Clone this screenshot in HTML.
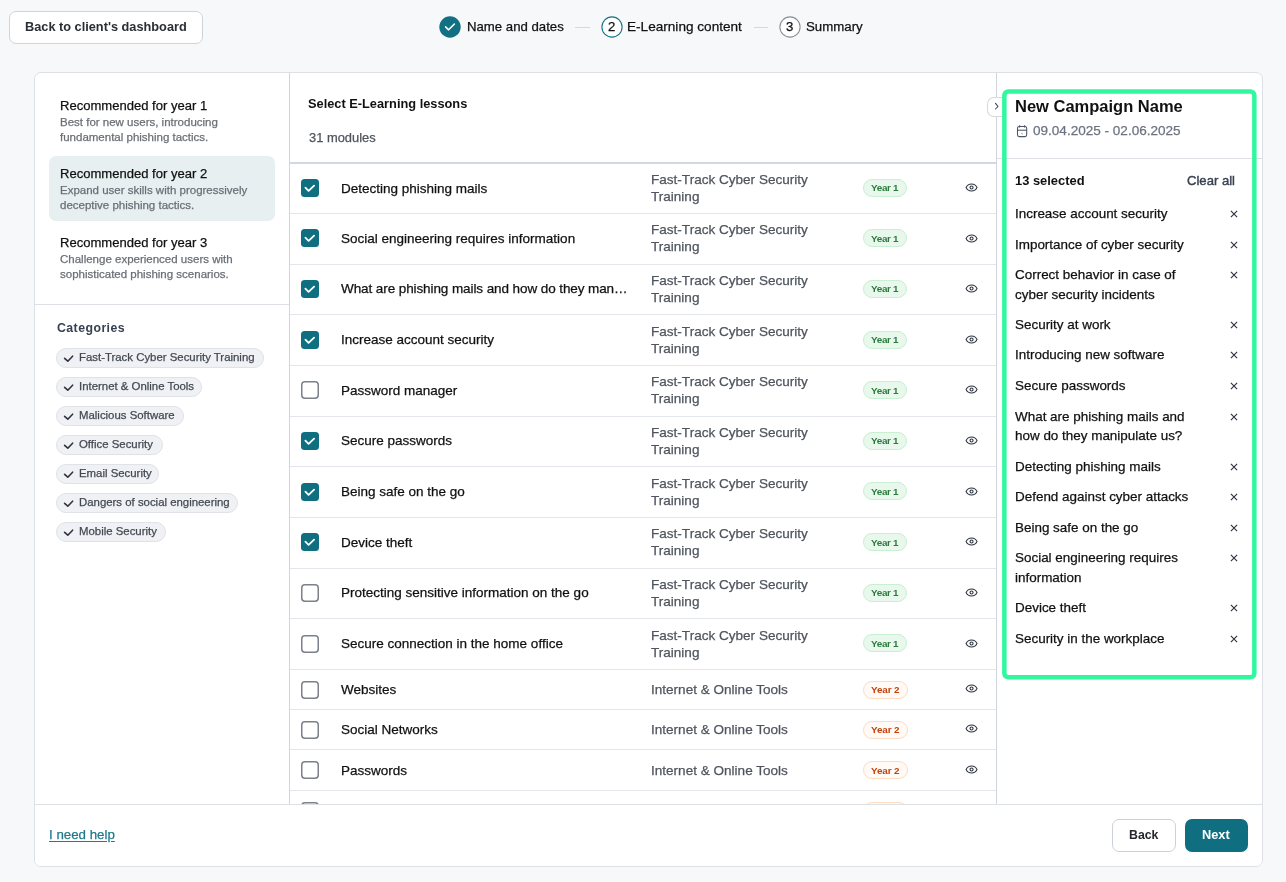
<!DOCTYPE html>
<html><head><meta charset="utf-8"><style>
html,body{margin:0;padding:0}
body{width:1286px;height:882px;overflow:hidden;background:#f7f8fa;position:relative;font-family:"Liberation Sans",sans-serif}
.a{position:absolute}
.t{position:absolute;white-space:nowrap;will-change:transform}
.chip{box-sizing:border-box;border:1px solid #dfe2e6;background:#eff1f4;border-radius:10px}
.badge{box-sizing:border-box;border-radius:9px;border:1px solid}
.b1{background:#e9f8ec;border-color:#c8efd0}
.b2{background:#fffaf6;border-color:#fddcc2}
</style></head><body>
<div class="a" style="left:9px;top:11px;width:194px;height:33px;box-sizing:border-box;border:1px solid #cfd4db;border-radius:7px;background:#fff"></div>
<div class="t" style="left:25.20px;top:17.18px;font-size:12.75px;font-weight:700;color:#2a2f36;line-height:20px;">Back to client's dashboard</div>
<svg class="a" style="left:439px;top:16.35px" width="22" height="22" viewBox="0 0 22 22"><circle cx="11" cy="11" r="10.7" fill="#127083"/><path d="M6.6 10.9 L9.6 13.8 L15.4 8.0" fill="none" stroke="#fff" stroke-width="1.6" stroke-linecap="round" stroke-linejoin="round"/></svg>
<div class="t" style="left:467.00px;top:17.02px;font-size:13.2px;font-weight:400;color:#111;line-height:20px;-webkit-text-stroke:0.25px #111;">Name and dates</div>
<div class="a" style="left:575px;top:27px;width:15px;height:1px;background:#d5d9de"></div>
<svg class="a" style="left:600.55px;top:16.4px" width="22" height="22" viewBox="0 0 22 22"><circle cx="11" cy="11" r="10.1" fill="#fff" stroke="#1b7385" stroke-width="1.1"/></svg>
<div class="t" style="left:607.60px;top:17.02px;font-size:13.2px;font-weight:400;color:#111;line-height:20px;-webkit-text-stroke:0.25px #111;">2</div>
<div class="t" style="left:627.30px;top:16.88px;font-size:13.6px;font-weight:400;color:#111;line-height:20px;-webkit-text-stroke:0.25px #111;">E-Learning content</div>
<div class="a" style="left:754px;top:27px;width:14px;height:1px;background:#d5d9de"></div>
<svg class="a" style="left:778.85px;top:16.4px" width="22" height="22" viewBox="0 0 22 22"><circle cx="11" cy="11" r="10.1" fill="#fff" stroke="#8b9199" stroke-width="1.1"/></svg>
<div class="t" style="left:786.20px;top:17.02px;font-size:13.2px;font-weight:400;color:#111;line-height:20px;-webkit-text-stroke:0.25px #111;">3</div>
<div class="t" style="left:806.30px;top:17.01px;font-size:13.25px;font-weight:400;color:#111;line-height:20px;-webkit-text-stroke:0.25px #111;">Summary</div>
<div class="a" style="left:34px;top:72px;width:1229px;height:795px;box-sizing:border-box;border:1px solid #dde1e6;border-radius:7px;background:#fff"></div>
<div class="a" style="left:289px;top:73px;width:1px;height:731px;background:#d0d5dc"></div>
<div class="a" style="left:996px;top:73px;width:1px;height:731px;background:#d0d5dc"></div>
<div class="a" style="left:35px;top:804px;width:1227px;height:1px;background:#dde1e6"></div>
<div class="a" style="left:49px;top:156px;width:226px;height:65px;background:#e7eff1;border-radius:7px"></div>
<div class="t" style="left:60.20px;top:96.28px;font-size:13.05px;font-weight:400;color:#111;line-height:20px;-webkit-text-stroke:0.25px #111;">Recommended for year 1</div>
<div class="t" style="left:60.20px;top:112.31px;font-size:11.5px;font-weight:400;color:#6a6f76;line-height:20px;-webkit-text-stroke:0.25px #6a6f76;">Best for new users, introducing</div>
<div class="t" style="left:60.20px;top:127.31px;font-size:11.5px;font-weight:400;color:#6a6f76;line-height:20px;-webkit-text-stroke:0.25px #6a6f76;">fundamental phishing tactics.</div>
<div class="t" style="left:60.20px;top:164.18px;font-size:13.05px;font-weight:400;color:#111;line-height:20px;-webkit-text-stroke:0.25px #111;">Recommended for year 2</div>
<div class="t" style="left:60.20px;top:180.21px;font-size:11.5px;font-weight:400;color:#6a6f76;line-height:20px;-webkit-text-stroke:0.25px #6a6f76;">Expand user skills with progressively</div>
<div class="t" style="left:60.20px;top:195.21px;font-size:11.5px;font-weight:400;color:#6a6f76;line-height:20px;-webkit-text-stroke:0.25px #6a6f76;">deceptive phishing tactics.</div>
<div class="t" style="left:60.20px;top:232.98px;font-size:13.05px;font-weight:400;color:#111;line-height:20px;-webkit-text-stroke:0.25px #111;">Recommended for year 3</div>
<div class="t" style="left:60.20px;top:249.01px;font-size:11.5px;font-weight:400;color:#6a6f76;line-height:20px;-webkit-text-stroke:0.25px #6a6f76;">Challenge experienced users with</div>
<div class="t" style="left:60.20px;top:264.01px;font-size:11.5px;font-weight:400;color:#6a6f76;line-height:20px;-webkit-text-stroke:0.25px #6a6f76;">sophisticated phishing scenarios.</div>
<div class="a" style="left:35px;top:304px;width:254px;height:1px;background:#dde1e6"></div>
<div class="t" style="left:57.00px;top:318.14px;font-size:12.3px;font-weight:700;color:#374151;line-height:20px;letter-spacing:0.45px">Categories</div>
<div class="a chip" style="left:56px;top:348px;width:208px;height:20px"></div>
<svg class="a" style="left:62px;top:353px" width="12" height="12" viewBox="0 0 12 12"><path d="M2.6 5.3 L5.8 8.2 L10.6 3.2" fill="none" stroke="#2d3340" stroke-width="1.6" stroke-linecap="round" stroke-linejoin="round"/></svg>
<div class="t" style="left:79.20px;top:346.85px;font-size:11.4px;font-weight:400;color:#434951;line-height:20px;-webkit-text-stroke:0.25px #434951;">Fast-Track Cyber Security Training</div>
<div class="a chip" style="left:56px;top:377px;width:146px;height:20px"></div>
<svg class="a" style="left:62px;top:382px" width="12" height="12" viewBox="0 0 12 12"><path d="M2.6 5.3 L5.8 8.2 L10.6 3.2" fill="none" stroke="#2d3340" stroke-width="1.6" stroke-linecap="round" stroke-linejoin="round"/></svg>
<div class="t" style="left:79.20px;top:376.05px;font-size:11.4px;font-weight:400;color:#434951;line-height:20px;-webkit-text-stroke:0.25px #434951;">Internet &amp; Online Tools</div>
<div class="a chip" style="left:56px;top:406px;width:128px;height:20px"></div>
<svg class="a" style="left:62px;top:411px" width="12" height="12" viewBox="0 0 12 12"><path d="M2.6 5.3 L5.8 8.2 L10.6 3.2" fill="none" stroke="#2d3340" stroke-width="1.6" stroke-linecap="round" stroke-linejoin="round"/></svg>
<div class="t" style="left:79.20px;top:404.95px;font-size:11.4px;font-weight:400;color:#434951;line-height:20px;-webkit-text-stroke:0.25px #434951;">Malicious Software</div>
<div class="a chip" style="left:56px;top:435px;width:107px;height:20px"></div>
<svg class="a" style="left:62px;top:440px" width="12" height="12" viewBox="0 0 12 12"><path d="M2.6 5.3 L5.8 8.2 L10.6 3.2" fill="none" stroke="#2d3340" stroke-width="1.6" stroke-linecap="round" stroke-linejoin="round"/></svg>
<div class="t" style="left:79.20px;top:433.85px;font-size:11.4px;font-weight:400;color:#434951;line-height:20px;-webkit-text-stroke:0.25px #434951;">Office Security</div>
<div class="a chip" style="left:56px;top:464px;width:103px;height:20px"></div>
<svg class="a" style="left:62px;top:469px" width="12" height="12" viewBox="0 0 12 12"><path d="M2.6 5.3 L5.8 8.2 L10.6 3.2" fill="none" stroke="#2d3340" stroke-width="1.6" stroke-linecap="round" stroke-linejoin="round"/></svg>
<div class="t" style="left:79.20px;top:463.05px;font-size:11.4px;font-weight:400;color:#434951;line-height:20px;-webkit-text-stroke:0.25px #434951;">Email Security</div>
<div class="a chip" style="left:56px;top:493px;width:182px;height:20px"></div>
<svg class="a" style="left:62px;top:498px" width="12" height="12" viewBox="0 0 12 12"><path d="M2.6 5.3 L5.8 8.2 L10.6 3.2" fill="none" stroke="#2d3340" stroke-width="1.6" stroke-linecap="round" stroke-linejoin="round"/></svg>
<div class="t" style="left:79.20px;top:491.85px;font-size:11.4px;font-weight:400;color:#434951;line-height:20px;-webkit-text-stroke:0.25px #434951;">Dangers of social engineering</div>
<div class="a chip" style="left:56px;top:522px;width:110px;height:20px"></div>
<svg class="a" style="left:62px;top:527px" width="12" height="12" viewBox="0 0 12 12"><path d="M2.6 5.3 L5.8 8.2 L10.6 3.2" fill="none" stroke="#2d3340" stroke-width="1.6" stroke-linecap="round" stroke-linejoin="round"/></svg>
<div class="t" style="left:79.20px;top:521.05px;font-size:11.4px;font-weight:400;color:#434951;line-height:20px;-webkit-text-stroke:0.25px #434951;">Mobile Security</div>
<div class="t" style="left:308.00px;top:94.06px;font-size:12.8px;font-weight:700;color:#111;line-height:20px;">Select E-Learning lessons</div>
<div class="t" style="left:309.30px;top:127.93px;font-size:12.9px;font-weight:400;color:#4f555d;line-height:20px;-webkit-text-stroke:0.25px #4f555d;">31 modules</div>
<div class="a" style="left:290px;top:162px;width:706px;height:2px;background:#d3d8de"></div>
<svg class="a" style="left:301px;top:179px" width="18" height="18" viewBox="0 0 18 18"><rect x="0" y="0" width="18" height="18" rx="3.5" fill="#0f6f81"/><path d="M4.4 8.7 L7.6 11.9 L13.1 6.6" fill="none" stroke="#fff" stroke-width="1.8" stroke-linecap="round" stroke-linejoin="round"/></svg>
<div class="t" style="left:340.70px;top:178.57px;font-size:13.5px;font-weight:400;color:#111;line-height:20px;-webkit-text-stroke:0.25px #111;">Detecting phishing mails</div>
<div class="t" style="left:650.60px;top:170.15px;font-size:13.55px;font-weight:400;color:#4f555e;line-height:20px;-webkit-text-stroke:0.25px #4f555e;">Fast-Track Cyber Security</div>
<div class="t" style="left:650.80px;top:187.15px;font-size:13.55px;font-weight:400;color:#4f555e;line-height:20px;-webkit-text-stroke:0.25px #4f555e;">Training</div>
<div class="a badge b1" style="left:863px;top:179px;width:44px;height:18px"></div>
<div class="t" style="left:871.00px;top:178.42px;font-size:9.9px;font-weight:700;color:#2b7a3b;line-height:20px;letter-spacing:-0.3px">Year 1</div>
<svg class="a" style="left:965.3px;top:181.25px" width="13.1" height="13.1" viewBox="0 0 24 24"><path d="M2 12 C2 12 5 5.6 12 5.6 C19 5.6 22 12 22 12 C22 12 19 18.4 12 18.4 C5 18.4 2 12 2 12Z" fill="none" stroke="#2d3340" stroke-width="2" stroke-linejoin="round"/><circle cx="12" cy="12" r="2.8" fill="none" stroke="#2d3340" stroke-width="2"/></svg>
<div class="a" style="left:290px;top:213px;width:706px;height:1px;background:#e3e6ea"></div>
<svg class="a" style="left:301px;top:229px" width="18" height="18" viewBox="0 0 18 18"><rect x="0" y="0" width="18" height="18" rx="3.5" fill="#0f6f81"/><path d="M4.4 8.7 L7.6 11.9 L13.1 6.6" fill="none" stroke="#fff" stroke-width="1.8" stroke-linecap="round" stroke-linejoin="round"/></svg>
<div class="t" style="left:340.70px;top:228.84px;font-size:13.5px;font-weight:400;color:#111;line-height:20px;-webkit-text-stroke:0.25px #111;">Social engineering requires information</div>
<div class="t" style="left:650.60px;top:220.43px;font-size:13.55px;font-weight:400;color:#4f555e;line-height:20px;-webkit-text-stroke:0.25px #4f555e;">Fast-Track Cyber Security</div>
<div class="t" style="left:650.80px;top:237.43px;font-size:13.55px;font-weight:400;color:#4f555e;line-height:20px;-webkit-text-stroke:0.25px #4f555e;">Training</div>
<div class="a badge b1" style="left:863px;top:229px;width:44px;height:18px"></div>
<div class="t" style="left:871.00px;top:228.69px;font-size:9.9px;font-weight:700;color:#2b7a3b;line-height:20px;letter-spacing:-0.3px">Year 1</div>
<svg class="a" style="left:965.3px;top:231.52px" width="13.1" height="13.1" viewBox="0 0 24 24"><path d="M2 12 C2 12 5 5.6 12 5.6 C19 5.6 22 12 22 12 C22 12 19 18.4 12 18.4 C5 18.4 2 12 2 12Z" fill="none" stroke="#2d3340" stroke-width="2" stroke-linejoin="round"/><circle cx="12" cy="12" r="2.8" fill="none" stroke="#2d3340" stroke-width="2"/></svg>
<div class="a" style="left:290px;top:264px;width:706px;height:1px;background:#e3e6ea"></div>
<svg class="a" style="left:301px;top:280px" width="18" height="18" viewBox="0 0 18 18"><rect x="0" y="0" width="18" height="18" rx="3.5" fill="#0f6f81"/><path d="M4.4 8.7 L7.6 11.9 L13.1 6.6" fill="none" stroke="#fff" stroke-width="1.8" stroke-linecap="round" stroke-linejoin="round"/></svg>
<div class="t" style="left:340.70px;top:279.49px;font-size:13.5px;font-weight:400;color:#111;line-height:20px;-webkit-text-stroke:0.25px #111;letter-spacing:-0.09px;">What are phishing mails and how do they man…</div>
<div class="t" style="left:650.60px;top:271.08px;font-size:13.55px;font-weight:400;color:#4f555e;line-height:20px;-webkit-text-stroke:0.25px #4f555e;">Fast-Track Cyber Security</div>
<div class="t" style="left:650.80px;top:288.08px;font-size:13.55px;font-weight:400;color:#4f555e;line-height:20px;-webkit-text-stroke:0.25px #4f555e;">Training</div>
<div class="a badge b1" style="left:863px;top:280px;width:44px;height:18px"></div>
<div class="t" style="left:871.00px;top:279.34px;font-size:9.9px;font-weight:700;color:#2b7a3b;line-height:20px;letter-spacing:-0.3px">Year 1</div>
<svg class="a" style="left:965.3px;top:282.17px" width="13.1" height="13.1" viewBox="0 0 24 24"><path d="M2 12 C2 12 5 5.6 12 5.6 C19 5.6 22 12 22 12 C22 12 19 18.4 12 18.4 C5 18.4 2 12 2 12Z" fill="none" stroke="#2d3340" stroke-width="2" stroke-linejoin="round"/><circle cx="12" cy="12" r="2.8" fill="none" stroke="#2d3340" stroke-width="2"/></svg>
<div class="a" style="left:290px;top:314px;width:706px;height:1px;background:#e3e6ea"></div>
<svg class="a" style="left:301px;top:331px" width="18" height="18" viewBox="0 0 18 18"><rect x="0" y="0" width="18" height="18" rx="3.5" fill="#0f6f81"/><path d="M4.4 8.7 L7.6 11.9 L13.1 6.6" fill="none" stroke="#fff" stroke-width="1.8" stroke-linecap="round" stroke-linejoin="round"/></svg>
<div class="t" style="left:340.70px;top:330.14px;font-size:13.5px;font-weight:400;color:#111;line-height:20px;-webkit-text-stroke:0.25px #111;">Increase account security</div>
<div class="t" style="left:650.60px;top:321.73px;font-size:13.55px;font-weight:400;color:#4f555e;line-height:20px;-webkit-text-stroke:0.25px #4f555e;">Fast-Track Cyber Security</div>
<div class="t" style="left:650.80px;top:338.73px;font-size:13.55px;font-weight:400;color:#4f555e;line-height:20px;-webkit-text-stroke:0.25px #4f555e;">Training</div>
<div class="a badge b1" style="left:863px;top:331px;width:44px;height:18px"></div>
<div class="t" style="left:871.00px;top:329.99px;font-size:9.9px;font-weight:700;color:#2b7a3b;line-height:20px;letter-spacing:-0.3px">Year 1</div>
<svg class="a" style="left:965.3px;top:332.82px" width="13.1" height="13.1" viewBox="0 0 24 24"><path d="M2 12 C2 12 5 5.6 12 5.6 C19 5.6 22 12 22 12 C22 12 19 18.4 12 18.4 C5 18.4 2 12 2 12Z" fill="none" stroke="#2d3340" stroke-width="2" stroke-linejoin="round"/><circle cx="12" cy="12" r="2.8" fill="none" stroke="#2d3340" stroke-width="2"/></svg>
<div class="a" style="left:290px;top:365px;width:706px;height:1px;background:#e3e6ea"></div>
<svg class="a" style="left:301px;top:381px" width="18" height="18" viewBox="0 0 18 18"><rect x="0.75" y="0.75" width="16.5" height="16.5" rx="3.2" fill="#fff" stroke="#7b818a" stroke-width="1.5"/></svg>
<div class="t" style="left:340.70px;top:380.79px;font-size:13.5px;font-weight:400;color:#111;line-height:20px;-webkit-text-stroke:0.25px #111;">Password manager</div>
<div class="t" style="left:650.60px;top:372.38px;font-size:13.55px;font-weight:400;color:#4f555e;line-height:20px;-webkit-text-stroke:0.25px #4f555e;">Fast-Track Cyber Security</div>
<div class="t" style="left:650.80px;top:389.38px;font-size:13.55px;font-weight:400;color:#4f555e;line-height:20px;-webkit-text-stroke:0.25px #4f555e;">Training</div>
<div class="a badge b1" style="left:863px;top:381px;width:44px;height:18px"></div>
<div class="t" style="left:871.00px;top:380.64px;font-size:9.9px;font-weight:700;color:#2b7a3b;line-height:20px;letter-spacing:-0.3px">Year 1</div>
<svg class="a" style="left:965.3px;top:383.47px" width="13.1" height="13.1" viewBox="0 0 24 24"><path d="M2 12 C2 12 5 5.6 12 5.6 C19 5.6 22 12 22 12 C22 12 19 18.4 12 18.4 C5 18.4 2 12 2 12Z" fill="none" stroke="#2d3340" stroke-width="2" stroke-linejoin="round"/><circle cx="12" cy="12" r="2.8" fill="none" stroke="#2d3340" stroke-width="2"/></svg>
<div class="a" style="left:290px;top:416px;width:706px;height:1px;background:#e3e6ea"></div>
<svg class="a" style="left:301px;top:432px" width="18" height="18" viewBox="0 0 18 18"><rect x="0" y="0" width="18" height="18" rx="3.5" fill="#0f6f81"/><path d="M4.4 8.7 L7.6 11.9 L13.1 6.6" fill="none" stroke="#fff" stroke-width="1.8" stroke-linecap="round" stroke-linejoin="round"/></svg>
<div class="t" style="left:340.70px;top:431.44px;font-size:13.5px;font-weight:400;color:#111;line-height:20px;-webkit-text-stroke:0.25px #111;">Secure passwords</div>
<div class="t" style="left:650.60px;top:423.03px;font-size:13.55px;font-weight:400;color:#4f555e;line-height:20px;-webkit-text-stroke:0.25px #4f555e;">Fast-Track Cyber Security</div>
<div class="t" style="left:650.80px;top:440.03px;font-size:13.55px;font-weight:400;color:#4f555e;line-height:20px;-webkit-text-stroke:0.25px #4f555e;">Training</div>
<div class="a badge b1" style="left:863px;top:432px;width:44px;height:18px"></div>
<div class="t" style="left:871.00px;top:431.29px;font-size:9.9px;font-weight:700;color:#2b7a3b;line-height:20px;letter-spacing:-0.3px">Year 1</div>
<svg class="a" style="left:965.3px;top:434.12px" width="13.1" height="13.1" viewBox="0 0 24 24"><path d="M2 12 C2 12 5 5.6 12 5.6 C19 5.6 22 12 22 12 C22 12 19 18.4 12 18.4 C5 18.4 2 12 2 12Z" fill="none" stroke="#2d3340" stroke-width="2" stroke-linejoin="round"/><circle cx="12" cy="12" r="2.8" fill="none" stroke="#2d3340" stroke-width="2"/></svg>
<div class="a" style="left:290px;top:466px;width:706px;height:1px;background:#e3e6ea"></div>
<svg class="a" style="left:301px;top:483px" width="18" height="18" viewBox="0 0 18 18"><rect x="0" y="0" width="18" height="18" rx="3.5" fill="#0f6f81"/><path d="M4.4 8.7 L7.6 11.9 L13.1 6.6" fill="none" stroke="#fff" stroke-width="1.8" stroke-linecap="round" stroke-linejoin="round"/></svg>
<div class="t" style="left:340.70px;top:482.09px;font-size:13.5px;font-weight:400;color:#111;line-height:20px;-webkit-text-stroke:0.25px #111;">Being safe on the go</div>
<div class="t" style="left:650.60px;top:473.68px;font-size:13.55px;font-weight:400;color:#4f555e;line-height:20px;-webkit-text-stroke:0.25px #4f555e;">Fast-Track Cyber Security</div>
<div class="t" style="left:650.80px;top:490.68px;font-size:13.55px;font-weight:400;color:#4f555e;line-height:20px;-webkit-text-stroke:0.25px #4f555e;">Training</div>
<div class="a badge b1" style="left:863px;top:482px;width:44px;height:18px"></div>
<div class="t" style="left:871.00px;top:481.94px;font-size:9.9px;font-weight:700;color:#2b7a3b;line-height:20px;letter-spacing:-0.3px">Year 1</div>
<svg class="a" style="left:965.3px;top:484.77px" width="13.1" height="13.1" viewBox="0 0 24 24"><path d="M2 12 C2 12 5 5.6 12 5.6 C19 5.6 22 12 22 12 C22 12 19 18.4 12 18.4 C5 18.4 2 12 2 12Z" fill="none" stroke="#2d3340" stroke-width="2" stroke-linejoin="round"/><circle cx="12" cy="12" r="2.8" fill="none" stroke="#2d3340" stroke-width="2"/></svg>
<div class="a" style="left:290px;top:517px;width:706px;height:1px;background:#e3e6ea"></div>
<svg class="a" style="left:301px;top:533px" width="18" height="18" viewBox="0 0 18 18"><rect x="0" y="0" width="18" height="18" rx="3.5" fill="#0f6f81"/><path d="M4.4 8.7 L7.6 11.9 L13.1 6.6" fill="none" stroke="#fff" stroke-width="1.8" stroke-linecap="round" stroke-linejoin="round"/></svg>
<div class="t" style="left:340.70px;top:532.74px;font-size:13.5px;font-weight:400;color:#111;line-height:20px;-webkit-text-stroke:0.25px #111;">Device theft</div>
<div class="t" style="left:650.60px;top:524.33px;font-size:13.55px;font-weight:400;color:#4f555e;line-height:20px;-webkit-text-stroke:0.25px #4f555e;">Fast-Track Cyber Security</div>
<div class="t" style="left:650.80px;top:541.33px;font-size:13.55px;font-weight:400;color:#4f555e;line-height:20px;-webkit-text-stroke:0.25px #4f555e;">Training</div>
<div class="a badge b1" style="left:863px;top:533px;width:44px;height:18px"></div>
<div class="t" style="left:871.00px;top:532.59px;font-size:9.9px;font-weight:700;color:#2b7a3b;line-height:20px;letter-spacing:-0.3px">Year 1</div>
<svg class="a" style="left:965.3px;top:535.42px" width="13.1" height="13.1" viewBox="0 0 24 24"><path d="M2 12 C2 12 5 5.6 12 5.6 C19 5.6 22 12 22 12 C22 12 19 18.4 12 18.4 C5 18.4 2 12 2 12Z" fill="none" stroke="#2d3340" stroke-width="2" stroke-linejoin="round"/><circle cx="12" cy="12" r="2.8" fill="none" stroke="#2d3340" stroke-width="2"/></svg>
<div class="a" style="left:290px;top:568px;width:706px;height:1px;background:#e3e6ea"></div>
<svg class="a" style="left:301px;top:584px" width="18" height="18" viewBox="0 0 18 18"><rect x="0.75" y="0.75" width="16.5" height="16.5" rx="3.2" fill="#fff" stroke="#7b818a" stroke-width="1.5"/></svg>
<div class="t" style="left:340.70px;top:583.39px;font-size:13.5px;font-weight:400;color:#111;line-height:20px;-webkit-text-stroke:0.25px #111;">Protecting sensitive information on the go</div>
<div class="t" style="left:650.60px;top:574.98px;font-size:13.55px;font-weight:400;color:#4f555e;line-height:20px;-webkit-text-stroke:0.25px #4f555e;">Fast-Track Cyber Security</div>
<div class="t" style="left:650.80px;top:591.98px;font-size:13.55px;font-weight:400;color:#4f555e;line-height:20px;-webkit-text-stroke:0.25px #4f555e;">Training</div>
<div class="a badge b1" style="left:863px;top:584px;width:44px;height:18px"></div>
<div class="t" style="left:871.00px;top:583.24px;font-size:9.9px;font-weight:700;color:#2b7a3b;line-height:20px;letter-spacing:-0.3px">Year 1</div>
<svg class="a" style="left:965.3px;top:586.07px" width="13.1" height="13.1" viewBox="0 0 24 24"><path d="M2 12 C2 12 5 5.6 12 5.6 C19 5.6 22 12 22 12 C22 12 19 18.4 12 18.4 C5 18.4 2 12 2 12Z" fill="none" stroke="#2d3340" stroke-width="2" stroke-linejoin="round"/><circle cx="12" cy="12" r="2.8" fill="none" stroke="#2d3340" stroke-width="2"/></svg>
<div class="a" style="left:290px;top:618px;width:706px;height:1px;background:#e3e6ea"></div>
<svg class="a" style="left:301px;top:635px" width="18" height="18" viewBox="0 0 18 18"><rect x="0.75" y="0.75" width="16.5" height="16.5" rx="3.2" fill="#fff" stroke="#7b818a" stroke-width="1.5"/></svg>
<div class="t" style="left:340.70px;top:634.04px;font-size:13.5px;font-weight:400;color:#111;line-height:20px;-webkit-text-stroke:0.25px #111;">Secure connection in the home office</div>
<div class="t" style="left:650.60px;top:625.63px;font-size:13.55px;font-weight:400;color:#4f555e;line-height:20px;-webkit-text-stroke:0.25px #4f555e;">Fast-Track Cyber Security</div>
<div class="t" style="left:650.80px;top:642.63px;font-size:13.55px;font-weight:400;color:#4f555e;line-height:20px;-webkit-text-stroke:0.25px #4f555e;">Training</div>
<div class="a badge b1" style="left:863px;top:634px;width:44px;height:18px"></div>
<div class="t" style="left:871.00px;top:633.89px;font-size:9.9px;font-weight:700;color:#2b7a3b;line-height:20px;letter-spacing:-0.3px">Year 1</div>
<svg class="a" style="left:965.3px;top:636.72px" width="13.1" height="13.1" viewBox="0 0 24 24"><path d="M2 12 C2 12 5 5.6 12 5.6 C19 5.6 22 12 22 12 C22 12 19 18.4 12 18.4 C5 18.4 2 12 2 12Z" fill="none" stroke="#2d3340" stroke-width="2" stroke-linejoin="round"/><circle cx="12" cy="12" r="2.8" fill="none" stroke="#2d3340" stroke-width="2"/></svg>
<div class="a" style="left:290px;top:669px;width:706px;height:1px;background:#e3e6ea"></div>
<svg class="a" style="left:301px;top:681px" width="18" height="18" viewBox="0 0 18 18"><rect x="0.75" y="0.75" width="16.5" height="16.5" rx="3.2" fill="#fff" stroke="#7b818a" stroke-width="1.5"/></svg>
<div class="t" style="left:340.70px;top:680.27px;font-size:13.5px;font-weight:400;color:#111;line-height:20px;-webkit-text-stroke:0.25px #111;">Websites</div>
<div class="t" style="left:651.00px;top:680.15px;font-size:13.55px;font-weight:400;color:#4f555e;line-height:20px;-webkit-text-stroke:0.25px #4f555e;">Internet &amp; Online Tools</div>
<div class="a badge b2" style="left:863px;top:681px;width:45px;height:18px"></div>
<div class="t" style="left:871.00px;top:680.12px;font-size:9.9px;font-weight:700;color:#c2410c;line-height:20px;letter-spacing:-0.1px">Year 2</div>
<svg class="a" style="left:965.3px;top:682.15px" width="13.1" height="13.1" viewBox="0 0 24 24"><path d="M2 12 C2 12 5 5.6 12 5.6 C19 5.6 22 12 22 12 C22 12 19 18.4 12 18.4 C5 18.4 2 12 2 12Z" fill="none" stroke="#2d3340" stroke-width="2" stroke-linejoin="round"/><circle cx="12" cy="12" r="2.8" fill="none" stroke="#2d3340" stroke-width="2"/></svg>
<div class="a" style="left:290px;top:709px;width:706px;height:1px;background:#e3e6ea"></div>
<svg class="a" style="left:301px;top:721px" width="18" height="18" viewBox="0 0 18 18"><rect x="0.75" y="0.75" width="16.5" height="16.5" rx="3.2" fill="#fff" stroke="#7b818a" stroke-width="1.5"/></svg>
<div class="t" style="left:340.70px;top:720.47px;font-size:13.5px;font-weight:400;color:#111;line-height:20px;-webkit-text-stroke:0.25px #111;">Social Networks</div>
<div class="t" style="left:651.00px;top:720.35px;font-size:13.55px;font-weight:400;color:#4f555e;line-height:20px;-webkit-text-stroke:0.25px #4f555e;">Internet &amp; Online Tools</div>
<div class="a badge b2" style="left:863px;top:721px;width:45px;height:18px"></div>
<div class="t" style="left:871.00px;top:720.32px;font-size:9.9px;font-weight:700;color:#c2410c;line-height:20px;letter-spacing:-0.1px">Year 2</div>
<svg class="a" style="left:965.3px;top:722.35px" width="13.1" height="13.1" viewBox="0 0 24 24"><path d="M2 12 C2 12 5 5.6 12 5.6 C19 5.6 22 12 22 12 C22 12 19 18.4 12 18.4 C5 18.4 2 12 2 12Z" fill="none" stroke="#2d3340" stroke-width="2" stroke-linejoin="round"/><circle cx="12" cy="12" r="2.8" fill="none" stroke="#2d3340" stroke-width="2"/></svg>
<div class="a" style="left:290px;top:749px;width:706px;height:1px;background:#e3e6ea"></div>
<svg class="a" style="left:301px;top:761px" width="18" height="18" viewBox="0 0 18 18"><rect x="0.75" y="0.75" width="16.5" height="16.5" rx="3.2" fill="#fff" stroke="#7b818a" stroke-width="1.5"/></svg>
<div class="t" style="left:340.70px;top:760.67px;font-size:13.5px;font-weight:400;color:#111;line-height:20px;-webkit-text-stroke:0.25px #111;">Passwords</div>
<div class="t" style="left:651.00px;top:760.55px;font-size:13.55px;font-weight:400;color:#4f555e;line-height:20px;-webkit-text-stroke:0.25px #4f555e;">Internet &amp; Online Tools</div>
<div class="a badge b2" style="left:863px;top:761px;width:45px;height:18px"></div>
<div class="t" style="left:871.00px;top:760.52px;font-size:9.9px;font-weight:700;color:#c2410c;line-height:20px;letter-spacing:-0.1px">Year 2</div>
<svg class="a" style="left:965.3px;top:762.55px" width="13.1" height="13.1" viewBox="0 0 24 24"><path d="M2 12 C2 12 5 5.6 12 5.6 C19 5.6 22 12 22 12 C22 12 19 18.4 12 18.4 C5 18.4 2 12 2 12Z" fill="none" stroke="#2d3340" stroke-width="2" stroke-linejoin="round"/><circle cx="12" cy="12" r="2.8" fill="none" stroke="#2d3340" stroke-width="2"/></svg>
<div class="a" style="left:290px;top:790px;width:706px;height:1px;background:#e3e6ea"></div>
<svg class="a" style="left:301px;top:802px" width="18" height="18" viewBox="0 0 18 18"><rect x="0.75" y="0.75" width="16.5" height="16.5" rx="3.2" fill="#fff" stroke="#7b818a" stroke-width="1.5"/></svg>
<div class="t" style="left:651.00px;top:800.75px;font-size:13.55px;font-weight:400;color:#4f555e;line-height:20px;-webkit-text-stroke:0.25px #4f555e;">Internet &amp; Online Tools</div>
<div class="a badge b2" style="left:863px;top:802px;width:45px;height:18px"></div>
<div class="t" style="left:871.00px;top:800.72px;font-size:9.9px;font-weight:700;color:#c2410c;line-height:20px;letter-spacing:-0.1px">Year 2</div>
<svg class="a" style="left:965.3px;top:802.75px" width="13.1" height="13.1" viewBox="0 0 24 24"><path d="M2 12 C2 12 5 5.6 12 5.6 C19 5.6 22 12 22 12 C22 12 19 18.4 12 18.4 C5 18.4 2 12 2 12Z" fill="none" stroke="#2d3340" stroke-width="2" stroke-linejoin="round"/><circle cx="12" cy="12" r="2.8" fill="none" stroke="#2d3340" stroke-width="2"/></svg>
<div class="a" style="left:35px;top:805px;width:1227px;height:61px;background:#fff;border-radius:0 0 6px 6px"></div>
<div class="a" style="left:290px;top:804px;width:706px;height:1px;background:#dde1e6"></div>
<div class="a" style="left:997px;top:158px;width:265px;height:1px;background:#dde1e6"></div>
<div class="t" style="left:1015.30px;top:96.08px;font-size:16.5px;font-weight:700;color:#111;line-height:20px;">New Campaign Name</div>
<svg class="a" style="left:1016px;top:124px" width="12" height="14" viewBox="0 0 12 14"><rect x="1.5" y="2.4" width="9.2" height="10.2" rx="1.8" fill="none" stroke="#4b5563" stroke-width="1.05"/><line x1="1.5" y1="6.2" x2="10.7" y2="6.2" stroke="#4b5563" stroke-width="1.05"/><line x1="3.6" y1="1.3" x2="3.6" y2="3.4" stroke="#4b5563" stroke-width="1.1"/><line x1="8.6" y1="1.3" x2="8.6" y2="3.4" stroke="#4b5563" stroke-width="1.1"/><line x1="5.8" y1="9.2" x2="6.3" y2="10.2" stroke="#4b5563" stroke-width="0.9"/></svg>
<div class="t" style="left:1033.40px;top:120.50px;font-size:13.55px;font-weight:400;color:#6b7280;line-height:20px;-webkit-text-stroke:0.25px #6b7280;">09.04.2025 - 02.06.2025</div>
<div class="t" style="left:1015.30px;top:170.93px;font-size:12.9px;font-weight:700;color:#111;line-height:20px;">13 selected</div>
<div class="t" style="left:1187.00px;top:171.06px;font-size:13.1px;font-weight:400;color:#374151;line-height:20px;-webkit-text-stroke:0.4px #374151">Clear all</div>
<div class="t" style="left:1014.80px;top:204.44px;font-size:13.45px;font-weight:400;color:#111;line-height:20px;-webkit-text-stroke:0.25px #111;">Increase account security</div>
<svg class="a" style="left:1228.0px;top:208.4px" width="12" height="12" viewBox="0 0 12 12"><path d="M2.9 2.9 L9.1 9.1 M9.1 2.9 L2.9 9.1" stroke="#2d3340" stroke-width="1.15" stroke-linecap="butt"/></svg>
<div class="t" style="left:1014.80px;top:235.04px;font-size:13.45px;font-weight:400;color:#111;line-height:20px;-webkit-text-stroke:0.25px #111;">Importance of cyber security</div>
<svg class="a" style="left:1228.0px;top:239.0px" width="12" height="12" viewBox="0 0 12 12"><path d="M2.9 2.9 L9.1 9.1 M9.1 2.9 L2.9 9.1" stroke="#2d3340" stroke-width="1.15" stroke-linecap="butt"/></svg>
<div class="t" style="left:1014.80px;top:265.04px;font-size:13.45px;font-weight:400;color:#111;line-height:20px;-webkit-text-stroke:0.25px #111;">Correct behavior in case of</div>
<div class="t" style="left:1014.80px;top:284.54px;font-size:13.45px;font-weight:400;color:#111;line-height:20px;-webkit-text-stroke:0.25px #111;">cyber security incidents</div>
<svg class="a" style="left:1228.0px;top:269.0px" width="12" height="12" viewBox="0 0 12 12"><path d="M2.9 2.9 L9.1 9.1 M9.1 2.9 L2.9 9.1" stroke="#2d3340" stroke-width="1.15" stroke-linecap="butt"/></svg>
<div class="t" style="left:1014.80px;top:314.74px;font-size:13.45px;font-weight:400;color:#111;line-height:20px;-webkit-text-stroke:0.25px #111;">Security at work</div>
<svg class="a" style="left:1228.0px;top:318.7px" width="12" height="12" viewBox="0 0 12 12"><path d="M2.9 2.9 L9.1 9.1 M9.1 2.9 L2.9 9.1" stroke="#2d3340" stroke-width="1.15" stroke-linecap="butt"/></svg>
<div class="t" style="left:1014.80px;top:345.34px;font-size:13.45px;font-weight:400;color:#111;line-height:20px;-webkit-text-stroke:0.25px #111;">Introducing new software</div>
<svg class="a" style="left:1228.0px;top:349.3px" width="12" height="12" viewBox="0 0 12 12"><path d="M2.9 2.9 L9.1 9.1 M9.1 2.9 L2.9 9.1" stroke="#2d3340" stroke-width="1.15" stroke-linecap="butt"/></svg>
<div class="t" style="left:1014.80px;top:375.94px;font-size:13.45px;font-weight:400;color:#111;line-height:20px;-webkit-text-stroke:0.25px #111;">Secure passwords</div>
<svg class="a" style="left:1228.0px;top:379.9px" width="12" height="12" viewBox="0 0 12 12"><path d="M2.9 2.9 L9.1 9.1 M9.1 2.9 L2.9 9.1" stroke="#2d3340" stroke-width="1.15" stroke-linecap="butt"/></svg>
<div class="t" style="left:1014.80px;top:406.74px;font-size:13.45px;font-weight:400;color:#111;line-height:20px;-webkit-text-stroke:0.25px #111;">What are phishing mails and</div>
<div class="t" style="left:1014.80px;top:426.24px;font-size:13.45px;font-weight:400;color:#111;line-height:20px;-webkit-text-stroke:0.25px #111;">how do they manipulate us?</div>
<svg class="a" style="left:1228.0px;top:410.7px" width="12" height="12" viewBox="0 0 12 12"><path d="M2.9 2.9 L9.1 9.1 M9.1 2.9 L2.9 9.1" stroke="#2d3340" stroke-width="1.15" stroke-linecap="butt"/></svg>
<div class="t" style="left:1014.80px;top:456.74px;font-size:13.45px;font-weight:400;color:#111;line-height:20px;-webkit-text-stroke:0.25px #111;">Detecting phishing mails</div>
<svg class="a" style="left:1228.0px;top:460.7px" width="12" height="12" viewBox="0 0 12 12"><path d="M2.9 2.9 L9.1 9.1 M9.1 2.9 L2.9 9.1" stroke="#2d3340" stroke-width="1.15" stroke-linecap="butt"/></svg>
<div class="t" style="left:1014.80px;top:487.44px;font-size:13.45px;font-weight:400;color:#111;line-height:20px;-webkit-text-stroke:0.25px #111;">Defend against cyber attacks</div>
<svg class="a" style="left:1228.0px;top:491.4px" width="12" height="12" viewBox="0 0 12 12"><path d="M2.9 2.9 L9.1 9.1 M9.1 2.9 L2.9 9.1" stroke="#2d3340" stroke-width="1.15" stroke-linecap="butt"/></svg>
<div class="t" style="left:1014.80px;top:517.84px;font-size:13.45px;font-weight:400;color:#111;line-height:20px;-webkit-text-stroke:0.25px #111;">Being safe on the go</div>
<svg class="a" style="left:1228.0px;top:521.8px" width="12" height="12" viewBox="0 0 12 12"><path d="M2.9 2.9 L9.1 9.1 M9.1 2.9 L2.9 9.1" stroke="#2d3340" stroke-width="1.15" stroke-linecap="butt"/></svg>
<div class="t" style="left:1014.80px;top:548.44px;font-size:13.45px;font-weight:400;color:#111;line-height:20px;-webkit-text-stroke:0.25px #111;">Social engineering requires</div>
<div class="t" style="left:1014.80px;top:567.94px;font-size:13.45px;font-weight:400;color:#111;line-height:20px;-webkit-text-stroke:0.25px #111;">information</div>
<svg class="a" style="left:1228.0px;top:552.4px" width="12" height="12" viewBox="0 0 12 12"><path d="M2.9 2.9 L9.1 9.1 M9.1 2.9 L2.9 9.1" stroke="#2d3340" stroke-width="1.15" stroke-linecap="butt"/></svg>
<div class="t" style="left:1014.80px;top:598.44px;font-size:13.45px;font-weight:400;color:#111;line-height:20px;-webkit-text-stroke:0.25px #111;">Device theft</div>
<svg class="a" style="left:1228.0px;top:602.4px" width="12" height="12" viewBox="0 0 12 12"><path d="M2.9 2.9 L9.1 9.1 M9.1 2.9 L2.9 9.1" stroke="#2d3340" stroke-width="1.15" stroke-linecap="butt"/></svg>
<div class="t" style="left:1014.80px;top:628.74px;font-size:13.45px;font-weight:400;color:#111;line-height:20px;-webkit-text-stroke:0.25px #111;">Security in the workplace</div>
<svg class="a" style="left:1228.0px;top:632.7px" width="12" height="12" viewBox="0 0 12 12"><path d="M2.9 2.9 L9.1 9.1 M9.1 2.9 L2.9 9.1" stroke="#2d3340" stroke-width="1.15" stroke-linecap="butt"/></svg>
<div class="a" style="left:987px;top:97px;width:19px;height:20px;box-sizing:border-box;border:1px solid #d5d9de;border-right:none;border-radius:7px 0 0 7px;background:#fff"></div>
<svg class="a" style="left:990px;top:100px" width="14" height="14" viewBox="0 0 14 14"><path d="M5.5 3.4 L8 6.5 L5.5 9.0" fill="none" stroke="#3a3f47" stroke-width="1.05" stroke-linecap="round" stroke-linejoin="round"/></svg>
<svg class="a" style="left:990px;top:80px" width="280" height="610"><rect x="14.35" y="11.55" width="250" height="585.7" rx="3.9" fill="none" stroke="#30f89f" stroke-width="4.5"/></svg>
<div class="t" style="left:49.00px;top:824.89px;font-size:13.3px;font-weight:400;color:#1f7a8c;line-height:20px;-webkit-text-stroke:0.25px #1f7a8c;text-decoration:underline;text-underline-offset:2px">I need help</div>
<div class="a" style="left:1112px;top:819px;width:64px;height:33px;box-sizing:border-box;border:1px solid #cdd2d9;border-radius:7px;background:#fff"></div>
<div class="t" style="left:1129.00px;top:825.14px;font-size:12.3px;font-weight:700;color:#24282e;line-height:20px;">Back</div>
<div class="a" style="left:1185px;top:819px;width:63px;height:33px;border-radius:7px;background:#0f6f81"></div>
<div class="t" style="left:1202.40px;top:824.96px;font-size:12.8px;font-weight:700;color:#fff;line-height:20px;">Next</div>
</body></html>
